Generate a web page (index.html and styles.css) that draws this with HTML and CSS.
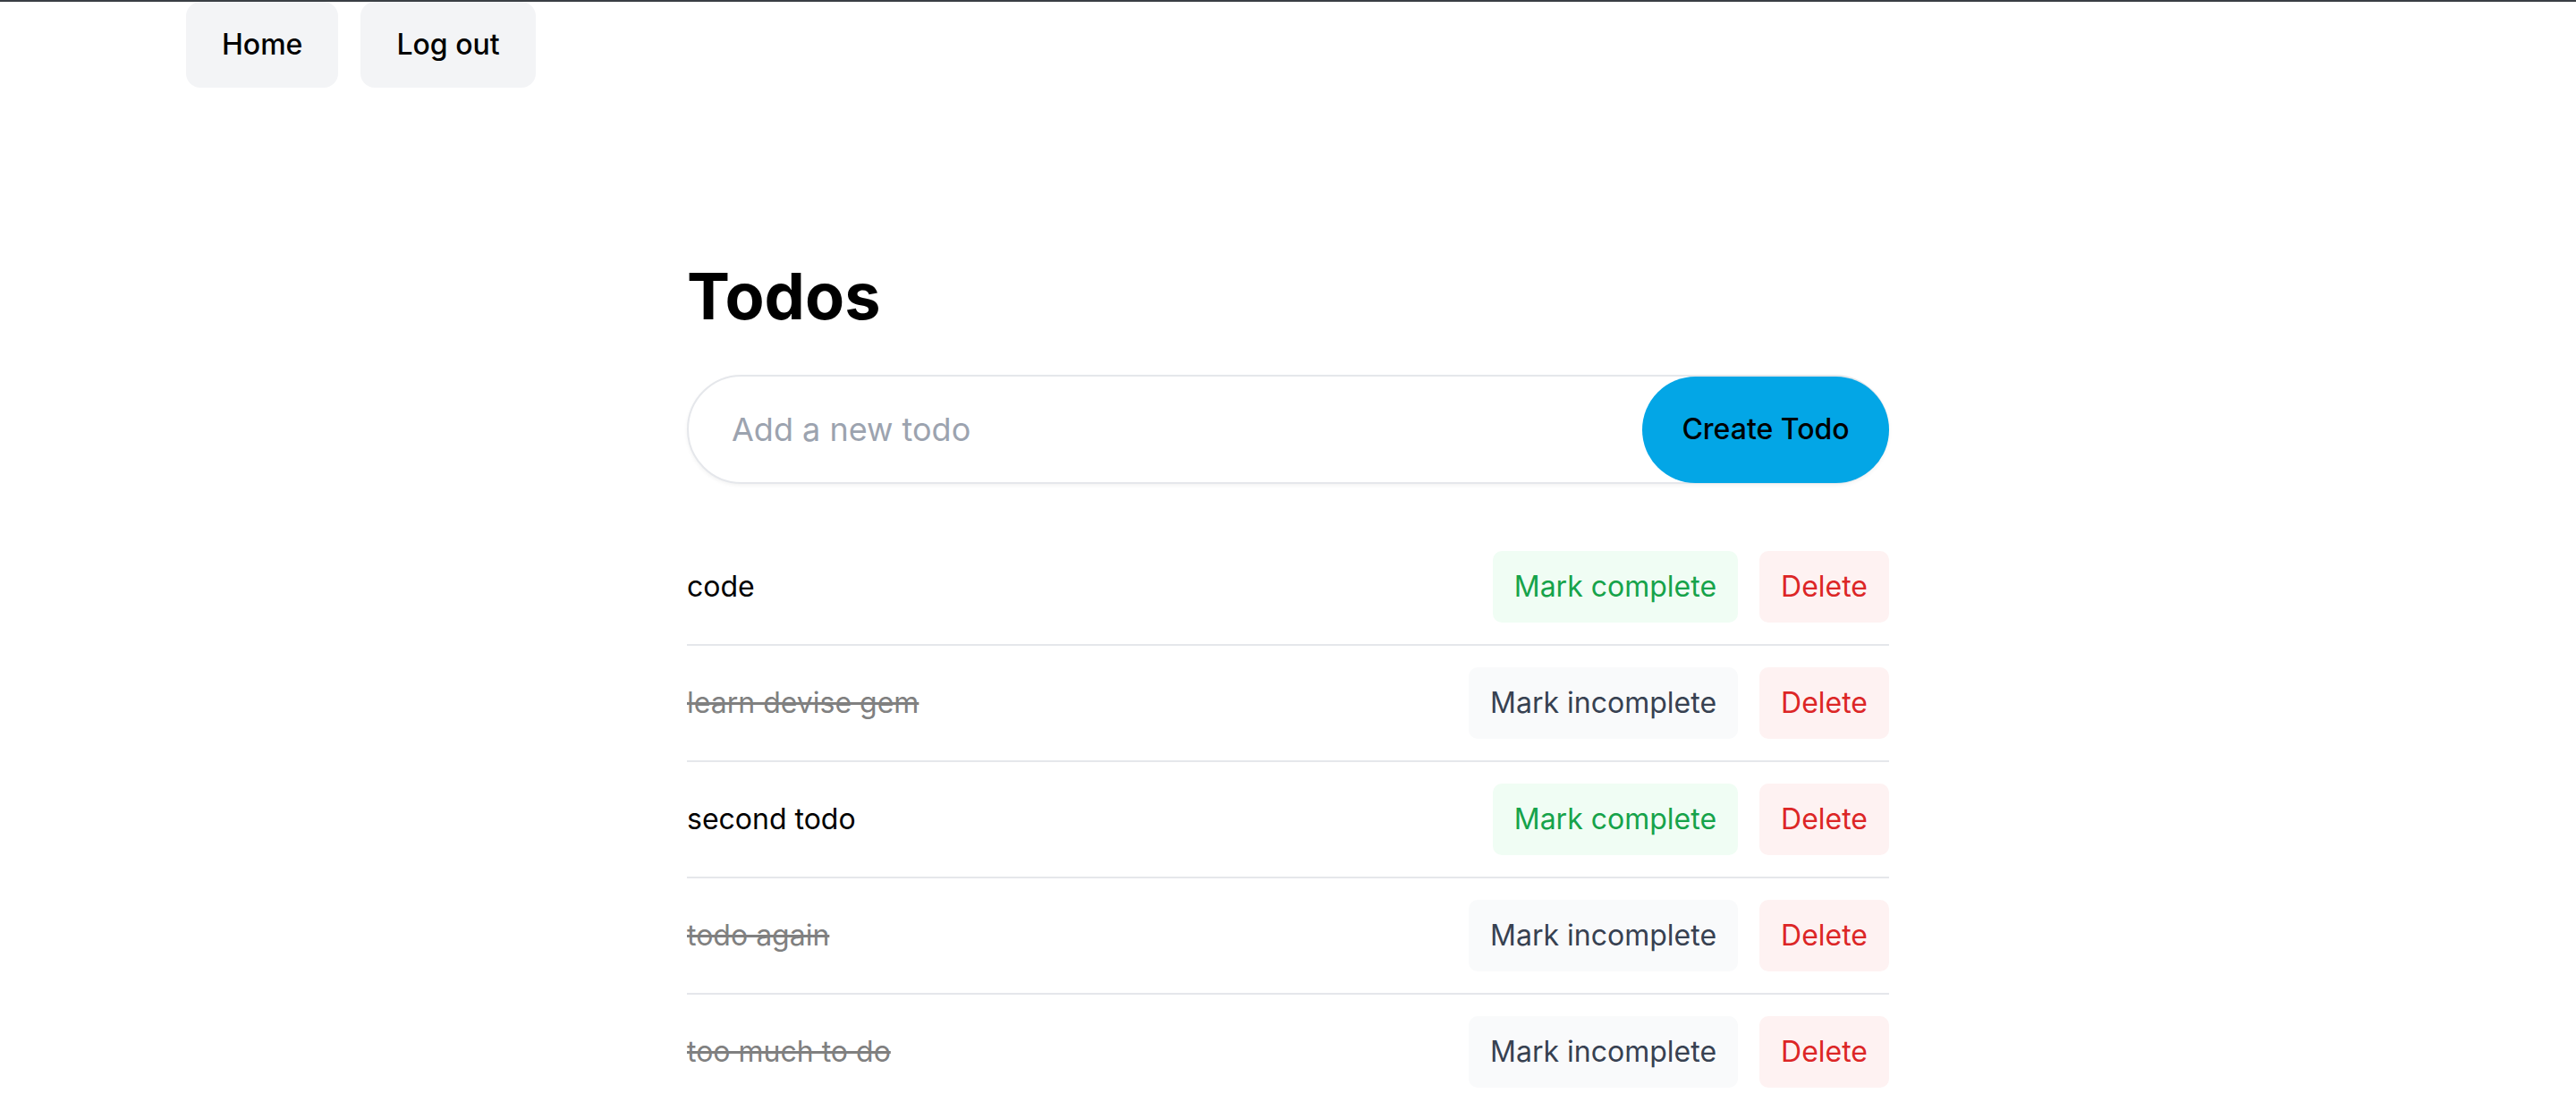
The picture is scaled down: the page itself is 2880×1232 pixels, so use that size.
FILE: index.html
```html
<!DOCTYPE html>
<html lang="en">
<head>
<meta charset="utf-8">
<title>Todos</title>
<link rel="stylesheet" href="styles.css">
</head>
<body>
<header class="nav">
  <a class="nav-btn" href="#">Home</a>
  <a class="nav-btn" href="#">Log out</a>
</header>
<main class="main">
  <h1 class="title">Todos</h1>
  <form class="new-todo">
    <input class="new-todo-input" type="text" placeholder="Add a new todo">
    <button class="create-btn" type="button">Create Todo</button>
  </form>
  <ul class="todo-list">
    <li class="todo">
      <span class="todo-text">code</span>
      <div class="actions">
        <button class="btn btn-complete" type="button">Mark complete</button>
        <button class="btn btn-delete" type="button">Delete</button>
      </div>
    </li>
    <li class="todo">
      <span class="todo-text done">learn devise gem</span>
      <div class="actions">
        <button class="btn btn-incomplete" type="button">Mark incomplete</button>
        <button class="btn btn-delete" type="button">Delete</button>
      </div>
    </li>
    <li class="todo">
      <span class="todo-text">second todo</span>
      <div class="actions">
        <button class="btn btn-complete" type="button">Mark complete</button>
        <button class="btn btn-delete" type="button">Delete</button>
      </div>
    </li>
    <li class="todo">
      <span class="todo-text done">todo again</span>
      <div class="actions">
        <button class="btn btn-incomplete" type="button">Mark incomplete</button>
        <button class="btn btn-delete" type="button">Delete</button>
      </div>
    </li>
    <li class="todo">
      <span class="todo-text done">too much to do</span>
      <div class="actions">
        <button class="btn btn-incomplete" type="button">Mark incomplete</button>
        <button class="btn btn-delete" type="button">Delete</button>
      </div>
    </li>
  </ul>
</main>
</body>
</html>
```
FILE: styles.css
```css
html, body {
  margin: 0;
  padding: 0;
  background: #ffffff;
}

body {
  font-family: Inter, "Noto Sans", "Liberation Sans", sans-serif;
  color: #000000;
}

.nav {
  display: flex;
  gap: 25px;
  padding-left: 208px;
  border-top: 2px solid #3a3f44;
}

.nav-btn {
  display: block;
  background: #f3f4f6;
  border-radius: 16px;
  padding: 24px 40px;
  font-size: 32px;
  line-height: 48px;
  font-weight: 500;
  color: #000000;
  text-decoration: none;
}

.main {
  width: 1344px;
  margin: 193px auto 0;
}

.title {
  margin: 0 0 48px;
  font-size: 72px;
  line-height: 80px;
  font-weight: 700;
}

.new-todo {
  display: flex;
  align-items: center;
  margin: 0;
}

.new-todo-input {
  flex: 1;
  box-sizing: border-box;
  height: 122px;
  border: 2px solid #e5e7eb;
  border-radius: 9999px;
  padding: 0 0 0 48px;
  font-family: inherit;
  font-size: 36px;
  color: #111827;
  background: #ffffff;
  outline: none;
  box-shadow: 0 2px 4px rgba(0, 0, 0, 0.05);
}

.new-todo-input::placeholder {
  color: #9ca3af;
}

.create-btn {
  width: 276px;
  height: 119px;
  margin-left: -276px;
  border: 0;
  border-radius: 9999px;
  background: #03a6e6;
  color: #000000;
  font-family: inherit;
  font-size: 32px;
  font-weight: 500;
  line-height: 48px;
  cursor: pointer;
}

.todo-list {
  list-style: none;
  margin: 51px 0 0;
  padding: 0;
}

.todo {
  display: flex;
  align-items: center;
  justify-content: space-between;
  padding: 24px 0;
  border-bottom: 2px solid #e5e7eb;
}

.todo-text {
  font-size: 32px;
  line-height: 48px;
}

.todo-text.done {
  color: #808080;
  text-decoration: line-through;
}

.actions {
  display: flex;
  gap: 24px;
}

.btn {
  border: 0;
  border-radius: 10px;
  padding: 16px 24px;
  font-family: inherit;
  font-size: 32px;
  line-height: 48px;
  font-weight: 400;
  cursor: pointer;
}

.btn-complete {
  background: #f0fdf4;
  color: #16a34a;
}

.btn-incomplete {
  background: #f9fafb;
  color: #374151;
}

.btn-delete {
  background: #fef2f2;
  color: #dc2626;
}
```
